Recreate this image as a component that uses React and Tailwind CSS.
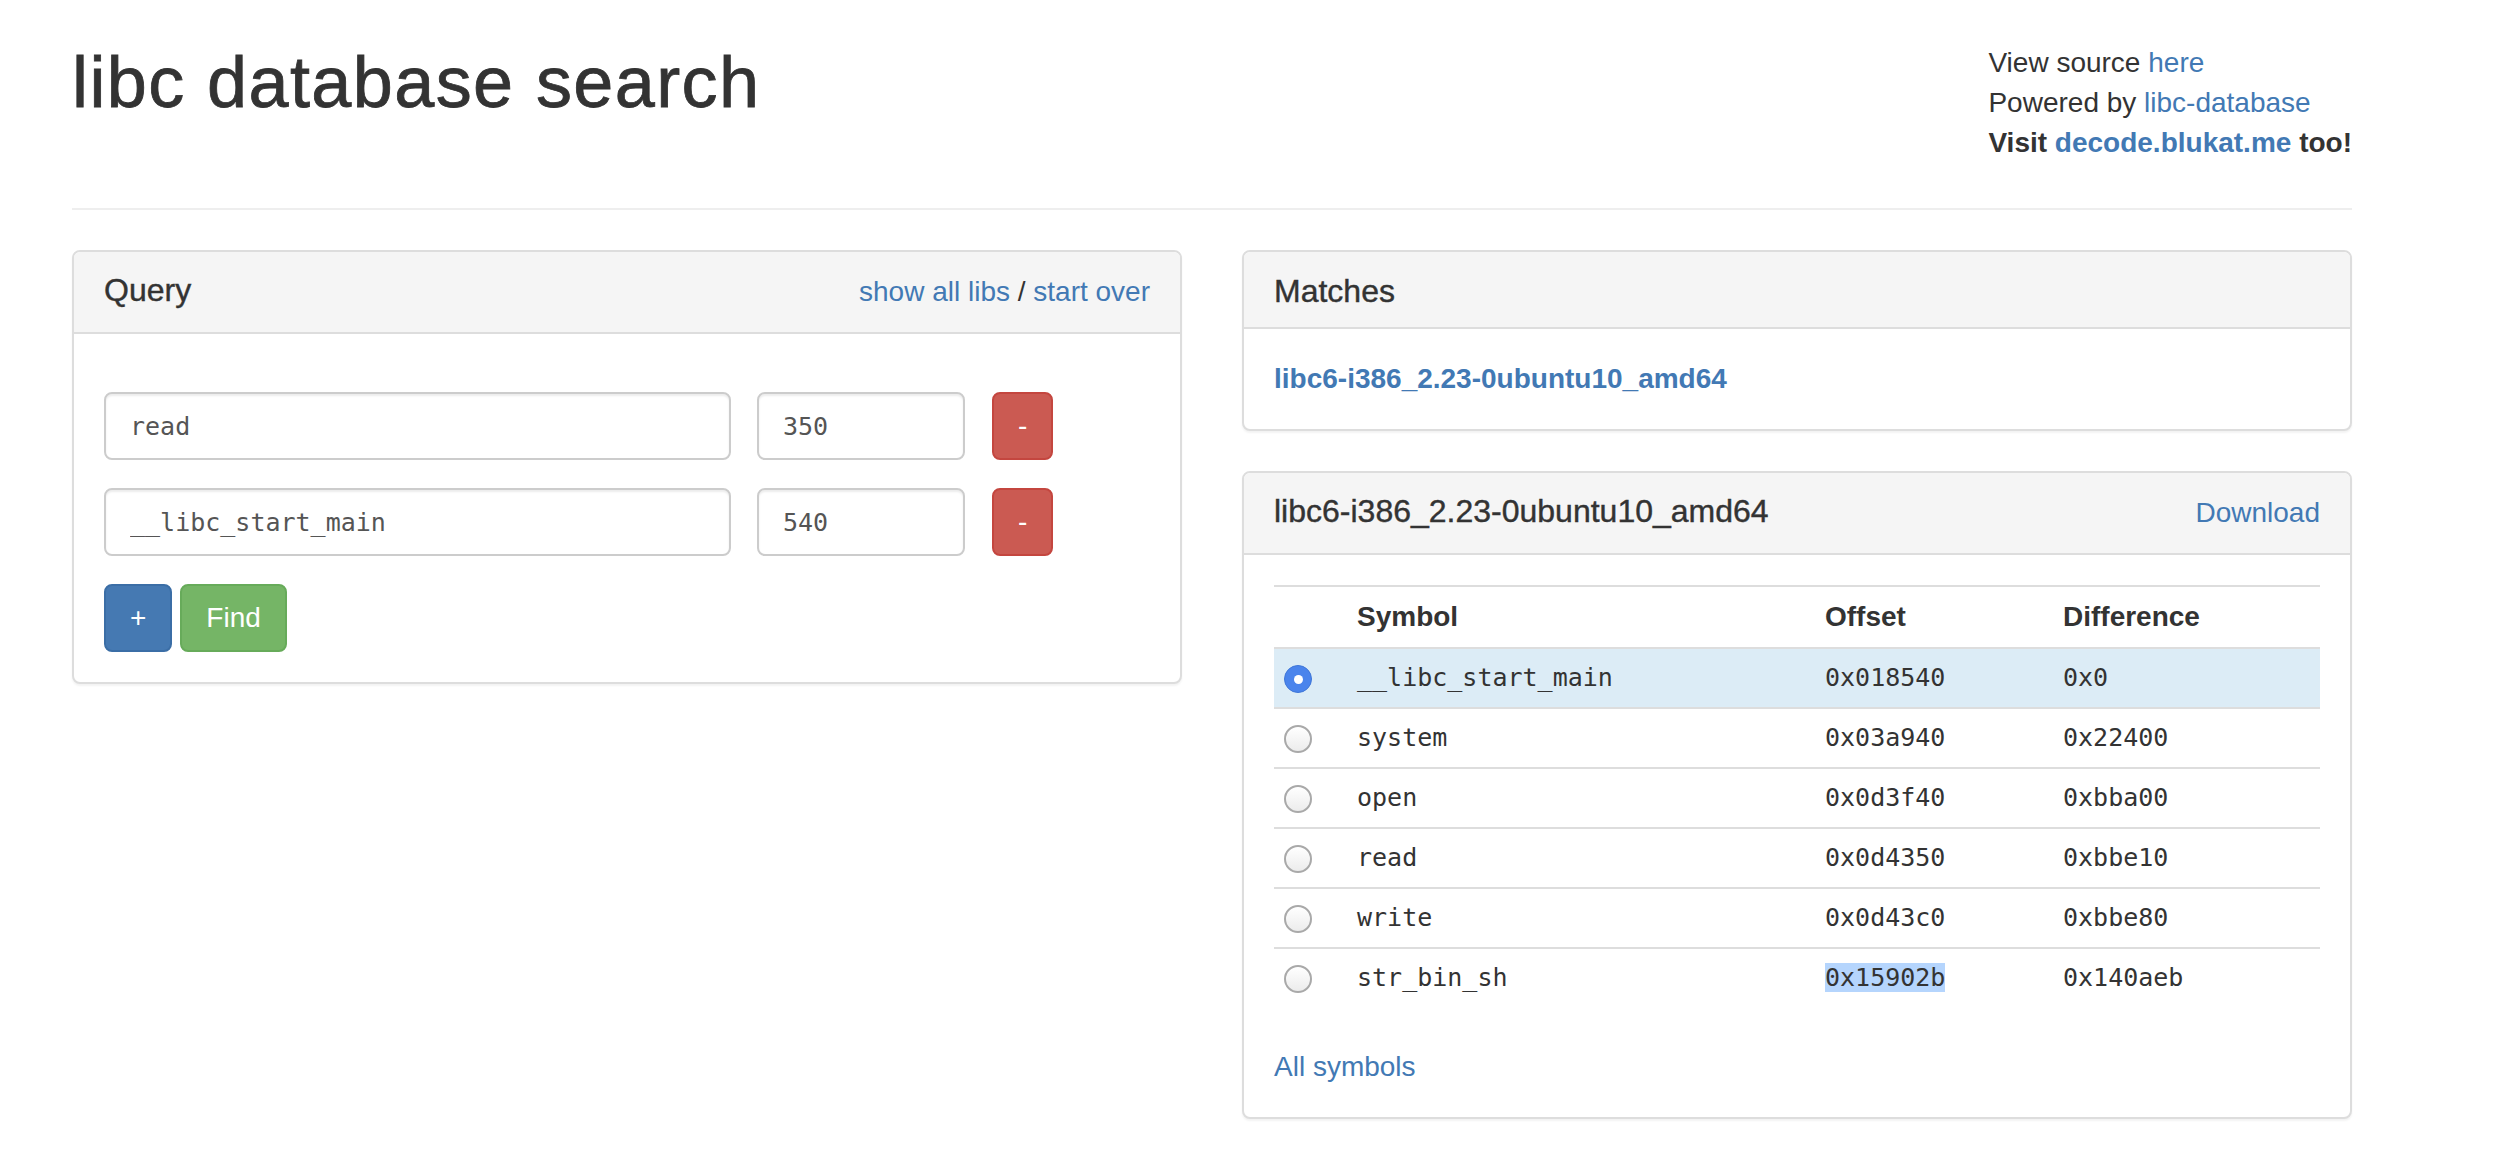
import React from 'react';

const sans = "font-['Liberation_Sans',Arial,sans-serif]";
const mono = "font-['DejaVu_Sans_Mono','Liberation_Mono',monospace]";

const queryRows = [
  { name: "read", offset: "350" },
  { name: "__libc_start_main", offset: "540" }
];

const symbols = [
  { name: "__libc_start_main", offset: "0x018540", diff: "0x0", selected: true },
  { name: "system", offset: "0x03a940", diff: "0x22400" },
  { name: "open", offset: "0x0d3f40", diff: "0xbba00" },
  { name: "read", offset: "0x0d4350", diff: "0xbbe10" },
  { name: "write", offset: "0x0d43c0", diff: "0xbbe80" },
  { name: "str_bin_sh", offset: "0x15902b", diff: "0x140aeb", highlight: true }
];

function Panel({ children, className = "" }) {
  return (
    <div className={`bg-white border-2 border-[#ddd] rounded-[8px] shadow-[0_2px_2px_rgba(0,0,0,0.05)] overflow-hidden ${className}`}>
      {children}
    </div>
  );
}

function Radio({ checked }) {
  if (checked) {
    return (
      <span className="flex items-center justify-center w-[28px] h-[28px] rounded-full bg-[#4a84ec] border border-[#3f76d8]">
        <span className="w-[9px] h-[9px] rounded-full bg-white" />
      </span>
    );
  }
  return (
    <span className="block w-[28px] h-[28px] rounded-full border-2 border-[#a9a9a9] bg-linear-to-b from-white to-[#ececec]" />
  );
}

export default function App() {
  return (
    <div className={`min-h-screen bg-white text-[#333] ${sans} pl-[72px]`}>
      <div className="w-[2280px]">
        {/* Page header */}
        <div className="flex justify-between items-start pt-[43px] pb-[45px] border-b-2 border-[#eee]">
          <h1 className="text-[72px] leading-[79.2px] font-normal tracking-[1.4px] [-webkit-text-stroke:0.8px_#333] m-0">libc database search</h1>
          <div className="text-[28px] leading-[40px]">
            <div>View source <a className="text-[#4279b4]">here</a></div>
            <div>Powered by <a className="text-[#4279b4]">libc-database</a></div>
            <div className="font-bold">Visit <a className="text-[#4279b4]">decode.blukat.me</a> too!</div>
          </div>
        </div>

        <div className="grid grid-cols-2 gap-x-[60px] mt-[40px] items-start">
          {/* Query */}
          <Panel>
            <div className="flex justify-between items-baseline bg-[#f5f5f5] border-b-2 border-[#ddd] px-[30px] py-[20px] leading-[40px]">
              <span className="text-[32px] leading-[35.2px] [-webkit-text-stroke:0.4px_#333]">Query</span>
              <span className="text-[28px]">
                <a className="text-[#4279b4]">show all libs</a> / <a className="text-[#4279b4]">start over</a>
              </span>
            </div>
            <div className="px-[30px] pt-[58px] pb-[30px] flex flex-col gap-[28px]">
              {queryRows.map((row) => (
                <div key={row.name} className="flex items-center">
                  <input
                    readOnly
                    value={row.name}
                    className={`w-[627px] h-[68px] border-2 border-[#ccc] rounded-[8px] px-[24px] text-[25px] text-[#555] ${mono} shadow-[inset_0_2px_2px_rgba(0,0,0,0.075)] outline-none`}
                  />
                  <input
                    readOnly
                    value={row.offset}
                    className={`ml-[26px] w-[208px] h-[68px] border-2 border-[#ccc] rounded-[8px] px-[24px] text-[25px] text-[#555] ${mono} shadow-[inset_0_2px_2px_rgba(0,0,0,0.075)] outline-none`}
                  />
                  <button className="ml-[27px] h-[68px] px-[24px] border-2 border-[#c4463f] bg-[#cb5a52] rounded-[8px] text-white text-[28px] leading-[40px]">
                    -
                  </button>
                </div>
              ))}
              <div className="flex gap-[8px]">
                <button className="h-[68px] px-[24px] border-2 border-[#3b6ea6] bg-[#4579b2] rounded-[8px] text-white text-[28px] leading-[40px]">
                  +
                </button>
                <button className="h-[68px] px-[24px] border-2 border-[#67ab5a] bg-[#75b566] rounded-[8px] text-white text-[28px] leading-[40px]">
                  Find
                </button>
              </div>
            </div>
          </Panel>

          <div className="flex flex-col gap-[40px]">
            {/* Matches */}
            <Panel>
              <div className="bg-[#f5f5f5] border-b-2 border-[#ddd] px-[30px] pt-[22px] pb-[18px]">
                <h3 className="text-[32px] leading-[35.2px] font-normal [-webkit-text-stroke:0.4px_#333] m-0">Matches</h3>
              </div>
              <div className="p-[30px] text-[28px] leading-[40px]">
                <a className="text-[#4279b4] font-bold">libc6-i386_2.23-0ubuntu10_amd64</a>
              </div>
            </Panel>

            {/* Result */}
            <Panel>
              <div className="flex justify-between items-baseline bg-[#f5f5f5] border-b-2 border-[#ddd] px-[30px] py-[20px] leading-[40px]">
                <span className="text-[32px] leading-[35.2px] [-webkit-text-stroke:0.4px_#333]">libc6-i386_2.23-0ubuntu10_amd64</span>
                <a className="text-[28px] text-[#4279b4]">Download</a>
              </div>
              <div className="p-[30px]">
                <table className="w-full table-fixed border-separate border-spacing-0">
                  <colgroup>
                    <col className="w-[73px]" />
                    <col className="w-[468px]" />
                    <col className="w-[238px]" />
                    <col />
                  </colgroup>
                  <thead>
                    <tr className="text-[28px] leading-[40px] font-bold text-left">
                      <th className="px-[10px] py-[10px] border-y-2 border-[#ddd]"></th>
                      <th className="px-[10px] py-[10px] border-y-2 border-[#ddd] text-left">Symbol</th>
                      <th className="px-[10px] py-[10px] border-y-2 border-[#ddd] text-left">Offset</th>
                      <th className="px-[10px] py-[10px] border-y-2 border-[#ddd] text-left">Difference</th>
                    </tr>
                  </thead>
                  <tbody className={`text-[25px] leading-[40px] ${mono}`}>
                    {symbols.map((s, i) => {
                      const cell = `px-[10px] py-[9px] ${i > 0 ? 'border-t-2 border-[#ddd]' : ''} ${s.selected ? 'bg-[#dcecf6]' : ''}`;
                      return (
                        <tr key={s.name}>
                          <td className={cell}>
                            <div className="h-[40px] flex items-center pt-[2px]">
                              <Radio checked={s.selected} />
                            </div>
                          </td>
                          <td className={cell}>{s.name}</td>
                          <td className={cell}>
                            {s.highlight ? <span className="bg-[#b5d5fd]">{s.offset}</span> : s.offset}
                          </td>
                          <td className={cell}>{s.diff}</td>
                        </tr>
                      );
                    })}
                  </tbody>
                </table>
                <div className="mt-[40px] text-[28px] leading-[40px]">
                  <a className="text-[#4279b4]">All symbols</a>
                </div>
              </div>
            </Panel>
          </div>
        </div>
      </div>
    </div>
  );
}
